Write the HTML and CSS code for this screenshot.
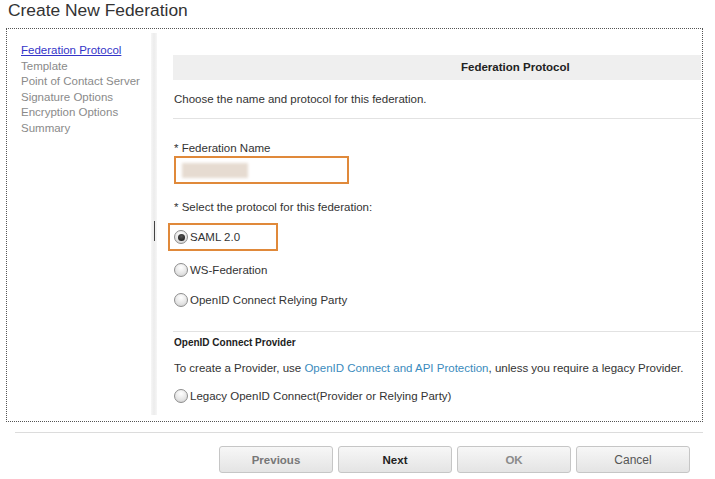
FILE: index.html
```html
<!DOCTYPE html>
<html>
<head>
<meta charset="utf-8">
<link rel="stylesheet" href="styles.css">
</head>
<body>
<h1 class="title">Create New Federation</h1>
<div class="wizard">
  <ul class="nav">
    <li><a class="nav-link" href="#">Federation Protocol</a></li>
    <li>Template</li>
    <li>Point of Contact Server</li>
    <li>Signature Options</li>
    <li>Encryption Options</li>
    <li>Summary</li>
  </ul>
  <div class="divider"><span class="caret"></span></div>
  <div class="content">
    <div class="band">Federation Protocol</div>
    <p class="intro">Choose the name and protocol for this federation.</p>
    <hr class="sep">
    <div class="label first">* Federation Name</div>
    <div class="input"><span class="blur"></span></div>
    <div class="label second">* Select the protocol for this federation:</div>
    <div class="radio-row highlight"><span class="radio checked"></span>SAML 2.0</div>
    <div class="radio-row ws"><span class="radio"></span>WS-Federation</div>
    <div class="radio-row oidc"><span class="radio"></span>OpenID Connect Relying Party</div>
    <hr class="sep sep2">
    <div class="subhead">OpenID Connect Provider</div>
    <p class="note">To create a Provider, use <a class="inline-link" href="#">OpenID Connect and API Protection</a>, unless you require a legacy Provider.</p>
    <div class="radio-row legacy"><span class="radio"></span>Legacy OpenID Connect(Provider or Relying Party)</div>
  </div>
</div>
<div class="footer-line"></div>
<div class="buttons">
  <button class="btn btn-muted">Previous</button>
  <button class="btn btn-strong">Next</button>
  <button class="btn btn-muted2">OK</button>
  <button class="btn btn-plain">Cancel</button>
</div>
</body>
</html>
```
FILE: styles.css
```css
* { box-sizing: border-box; }
body {
  margin: 0;
  font-family: "Liberation Sans", Arial, sans-serif;
  color: #333;
  background: #fff;
  width: 715px;
  height: 479px;
  overflow: hidden;
}
.title {
  margin: 0;
  padding: 0 0 0 8px;
  height: 28px;
  font-size: 17.4px;
  font-weight: normal;
  line-height: 20px;
  color: #333;
}
.wizard {
  position: relative;
  margin: 0 12px 0 6px;
  height: 394px;
  border: 1px dotted #555;
  display: flex;
}
.nav {
  list-style: none;
  margin: 0;
  padding: 14px 0 0 14px;
  width: 144px;
  font-size: 11.5px;
  line-height: 15.6px;
  color: #8a8a8a;
}
.nav-link {
  color: #3434c8;
  text-decoration: underline;
}
.divider {
  width: 6px;
  margin: 4px 0 6px 0;
  background: linear-gradient(to right, #f6f6f6, #ececec 50%, #f6f6f6);
}
.caret {
  position: absolute;
  left: 147px;
  top: 192px;
  width: 1px;
  height: 20px;
  background: #444;
}
.content {
  flex: 1;
  padding: 26px 1px 0 16px;
  font-size: 11.5px;
  line-height: 14px;
}
.band {
  height: 25px;
  line-height: 24px;
  background: #efefef;
  font-weight: bold;
  padding-left: 288px;
  color: #222;
}
.intro {
  margin: 12px 0 0 1px;
}
.sep {
  margin: 12px 0 0 0;
  border: 0;
  border-top: 1px solid #e2e2e2;
  height: 0;
}
.label { margin-left: 1px; }
.label.first { margin-top: 22px; }
.label.second { margin-top: 16px; }
.input {
  margin-top: 1px;
  margin-left: 1px;
  width: 175px;
  height: 28px;
  border: 2px solid #e0893a;
  padding: 5px 6px;
}
.blur {
  display: block;
  width: 66px;
  height: 15px;
  background: #e6dbd1;
  filter: blur(1.5px);
}
.radio-row {
  display: flex;
  align-items: center;
  height: 16px;
  margin-left: 1px;
  color: #333;
}
.radio {
  width: 14px;
  height: 14px;
  border-radius: 50%;
  border: 1px solid #8e8e8e;
  background: radial-gradient(circle at 50% 30%, #ffffff, #e4e4e4 60%, #c8c8c8);
  margin-right: 2px;
  flex: none;
  position: relative;
}
.radio.checked::after {
  content: "";
  position: absolute;
  left: 2.5px;
  top: 2.5px;
  width: 7px;
  height: 7px;
  border-radius: 50%;
  background: radial-gradient(circle at 50% 35%, #555, #111);
}
.highlight {
  margin-top: 9px;
  margin-left: -5px;
  width: 110px;
  height: 28px;
  border: 2px solid #e0893a;
  padding-left: 4px;
}
.ws { margin-top: 11px; }
.oidc { margin-top: 14px; }
.sep2 { margin-top: 23px; }
.subhead {
  margin: 5px 0 0 1px;
  font-size: 10px;
  line-height: 12px;
  font-weight: bold;
  color: #222;
}
.note {
  margin: 12px 0 0 1px;
}
.inline-link {
  color: #3a8bbd;
  text-decoration: none;
}
.legacy { margin-top: 13px; }
.footer-line {
  margin: 10px 12px 0 15px;
  border-top: 1px solid #dcdcdc;
  height: 0;
}
.buttons {
  display: flex;
  justify-content: flex-end;
  gap: 5px;
  padding-right: 25px;
  margin-top: 13px;
}
.btn {
  width: 114px;
  height: 27px;
  border: 1px solid #c6c6c6;
  border-radius: 3px;
  background: linear-gradient(to bottom, #f7f7f7, #e4e4e4);
  font-family: "Liberation Sans", Arial, sans-serif;
  font-size: 11.5px;
  font-weight: bold;
  color: #777;
  padding: 0;
}
.btn-strong { color: #222; }
.btn-muted2 { color: #8a8a8a; }
.btn-plain { font-weight: normal; font-size: 12px; color: #555; }
```
